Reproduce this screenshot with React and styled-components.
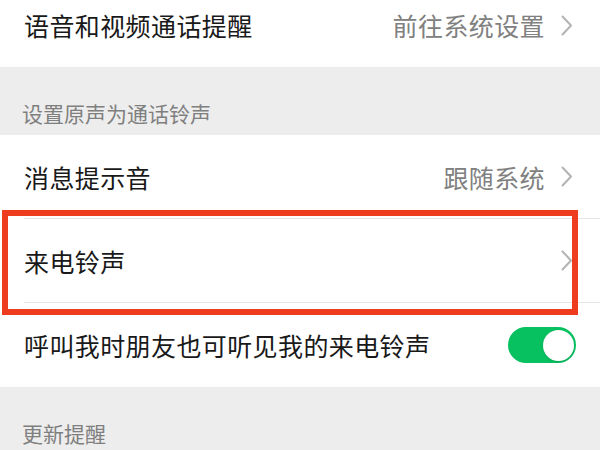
import React from "react";
import styled, { createGlobalStyle } from "styled-components";

const Global = createGlobalStyle`
  html, body {
    margin: 0;
    padding: 0;
    background: #ededed;
    overflow: hidden;
  }
  body {
    font-family: "Noto Sans CJK SC", "Noto Sans", sans-serif;
  }
`;

const Page = styled.div`
  width: 600px;
  height: 450px;
  overflow: hidden;
  background: #ededed;
`;

const List = styled.div`
  margin-top: -17px;
`;

const SectionTitle = styled.div`
  height: 68px;
  box-sizing: border-box;
  display: flex;
  align-items: flex-end;
  padding: 0 0 10px 22px;
  font-size: 21px;
  line-height: 24px;
  color: #7f7f7f;
  background: #ededed;
`;

const Group = styled.div`
  background: #ffffff;
`;

const Row = styled.div`
  position: relative;
  height: ${({ $h }) => $h || 83}px;
  display: flex;
  align-items: center;
  justify-content: space-between;
  padding: 0 ${({ $pr }) => $pr || 27}px 0 24px;
  background: #ffffff;
`;

const Label = styled.span`
  font-size: 25px;
  line-height: 30px;
  color: #191919;
  letter-spacing: 0.4px;
`;

const Right = styled.div`
  display: flex;
  align-items: center;
  gap: 16px;
`;

const Value = styled.span`
  font-size: 25px;
  line-height: 30px;
  color: #808080;
  letter-spacing: 0.4px;
`;

const Divider = styled.div`
  height: 1px;
  margin-left: 24px;
  background: #e6e6e6;
`;

const Highlight = styled.span`
  position: absolute;
  z-index: 2;
  top: -9px;
  left: 2px;
  width: 576px;
  height: 105px;
  box-sizing: border-box;
  border: 6.5px solid #ee3d1e;
  pointer-events: none;
`;

const Toggle = styled.span`
  position: relative;
  width: 68px;
  height: 36px;
  border-radius: 18px;
  background: ${({ $on }) => ($on ? "#07c160" : "#e5e5e5")};
  display: inline-block;
`;

const Knob = styled.span`
  position: absolute;
  top: 2.5px;
  right: ${({ $on }) => ($on ? "2.5px" : "auto")};
  left: ${({ $on }) => ($on ? "auto" : "2.5px")};
  width: 31px;
  height: 31px;
  border-radius: 50%;
  background: #ffffff;
  box-shadow: 0 1px 2px rgba(0, 0, 0, 0.15);
`;

const Chevron = () => (
  <svg width="12" height="21" viewBox="0 0 12 21">
    <path
      d="M1.5 1.5 L10 10.5 L1.5 19.5"
      fill="none"
      stroke="#b3b3b3"
      strokeWidth="2"
      strokeLinecap="round"
      strokeLinejoin="round"
    />
  </svg>
);

export default function App() {
  return (
    <Page>
      <Global />
      <List>
        <Group>
          <Row $h={84}>
            <Label>语音和视频通话提醒</Label>
            <Right>
              <Value>前往系统设置</Value>
              <Chevron />
            </Right>
          </Row>
        </Group>
        <SectionTitle>设置原声为通话铃声</SectionTitle>
        <Group>
          <Row>
            <Label>消息提示音</Label>
            <Right>
              <Value>跟随系统</Value>
              <Chevron />
            </Right>
          </Row>
          <Divider />
          <Row>
            <Label>来电铃声</Label>
            <Right>
              <Chevron />
            </Right>
            <Highlight />
          </Row>
          <Divider />
          <Row $h={84} $pr={24}>
            <Label>呼叫我时朋友也可听见我的来电铃声</Label>
            <Toggle $on>
              <Knob $on />
            </Toggle>
          </Row>
        </Group>
        <SectionTitle>更新提醒</SectionTitle>
      </List>
    </Page>
  );
}
